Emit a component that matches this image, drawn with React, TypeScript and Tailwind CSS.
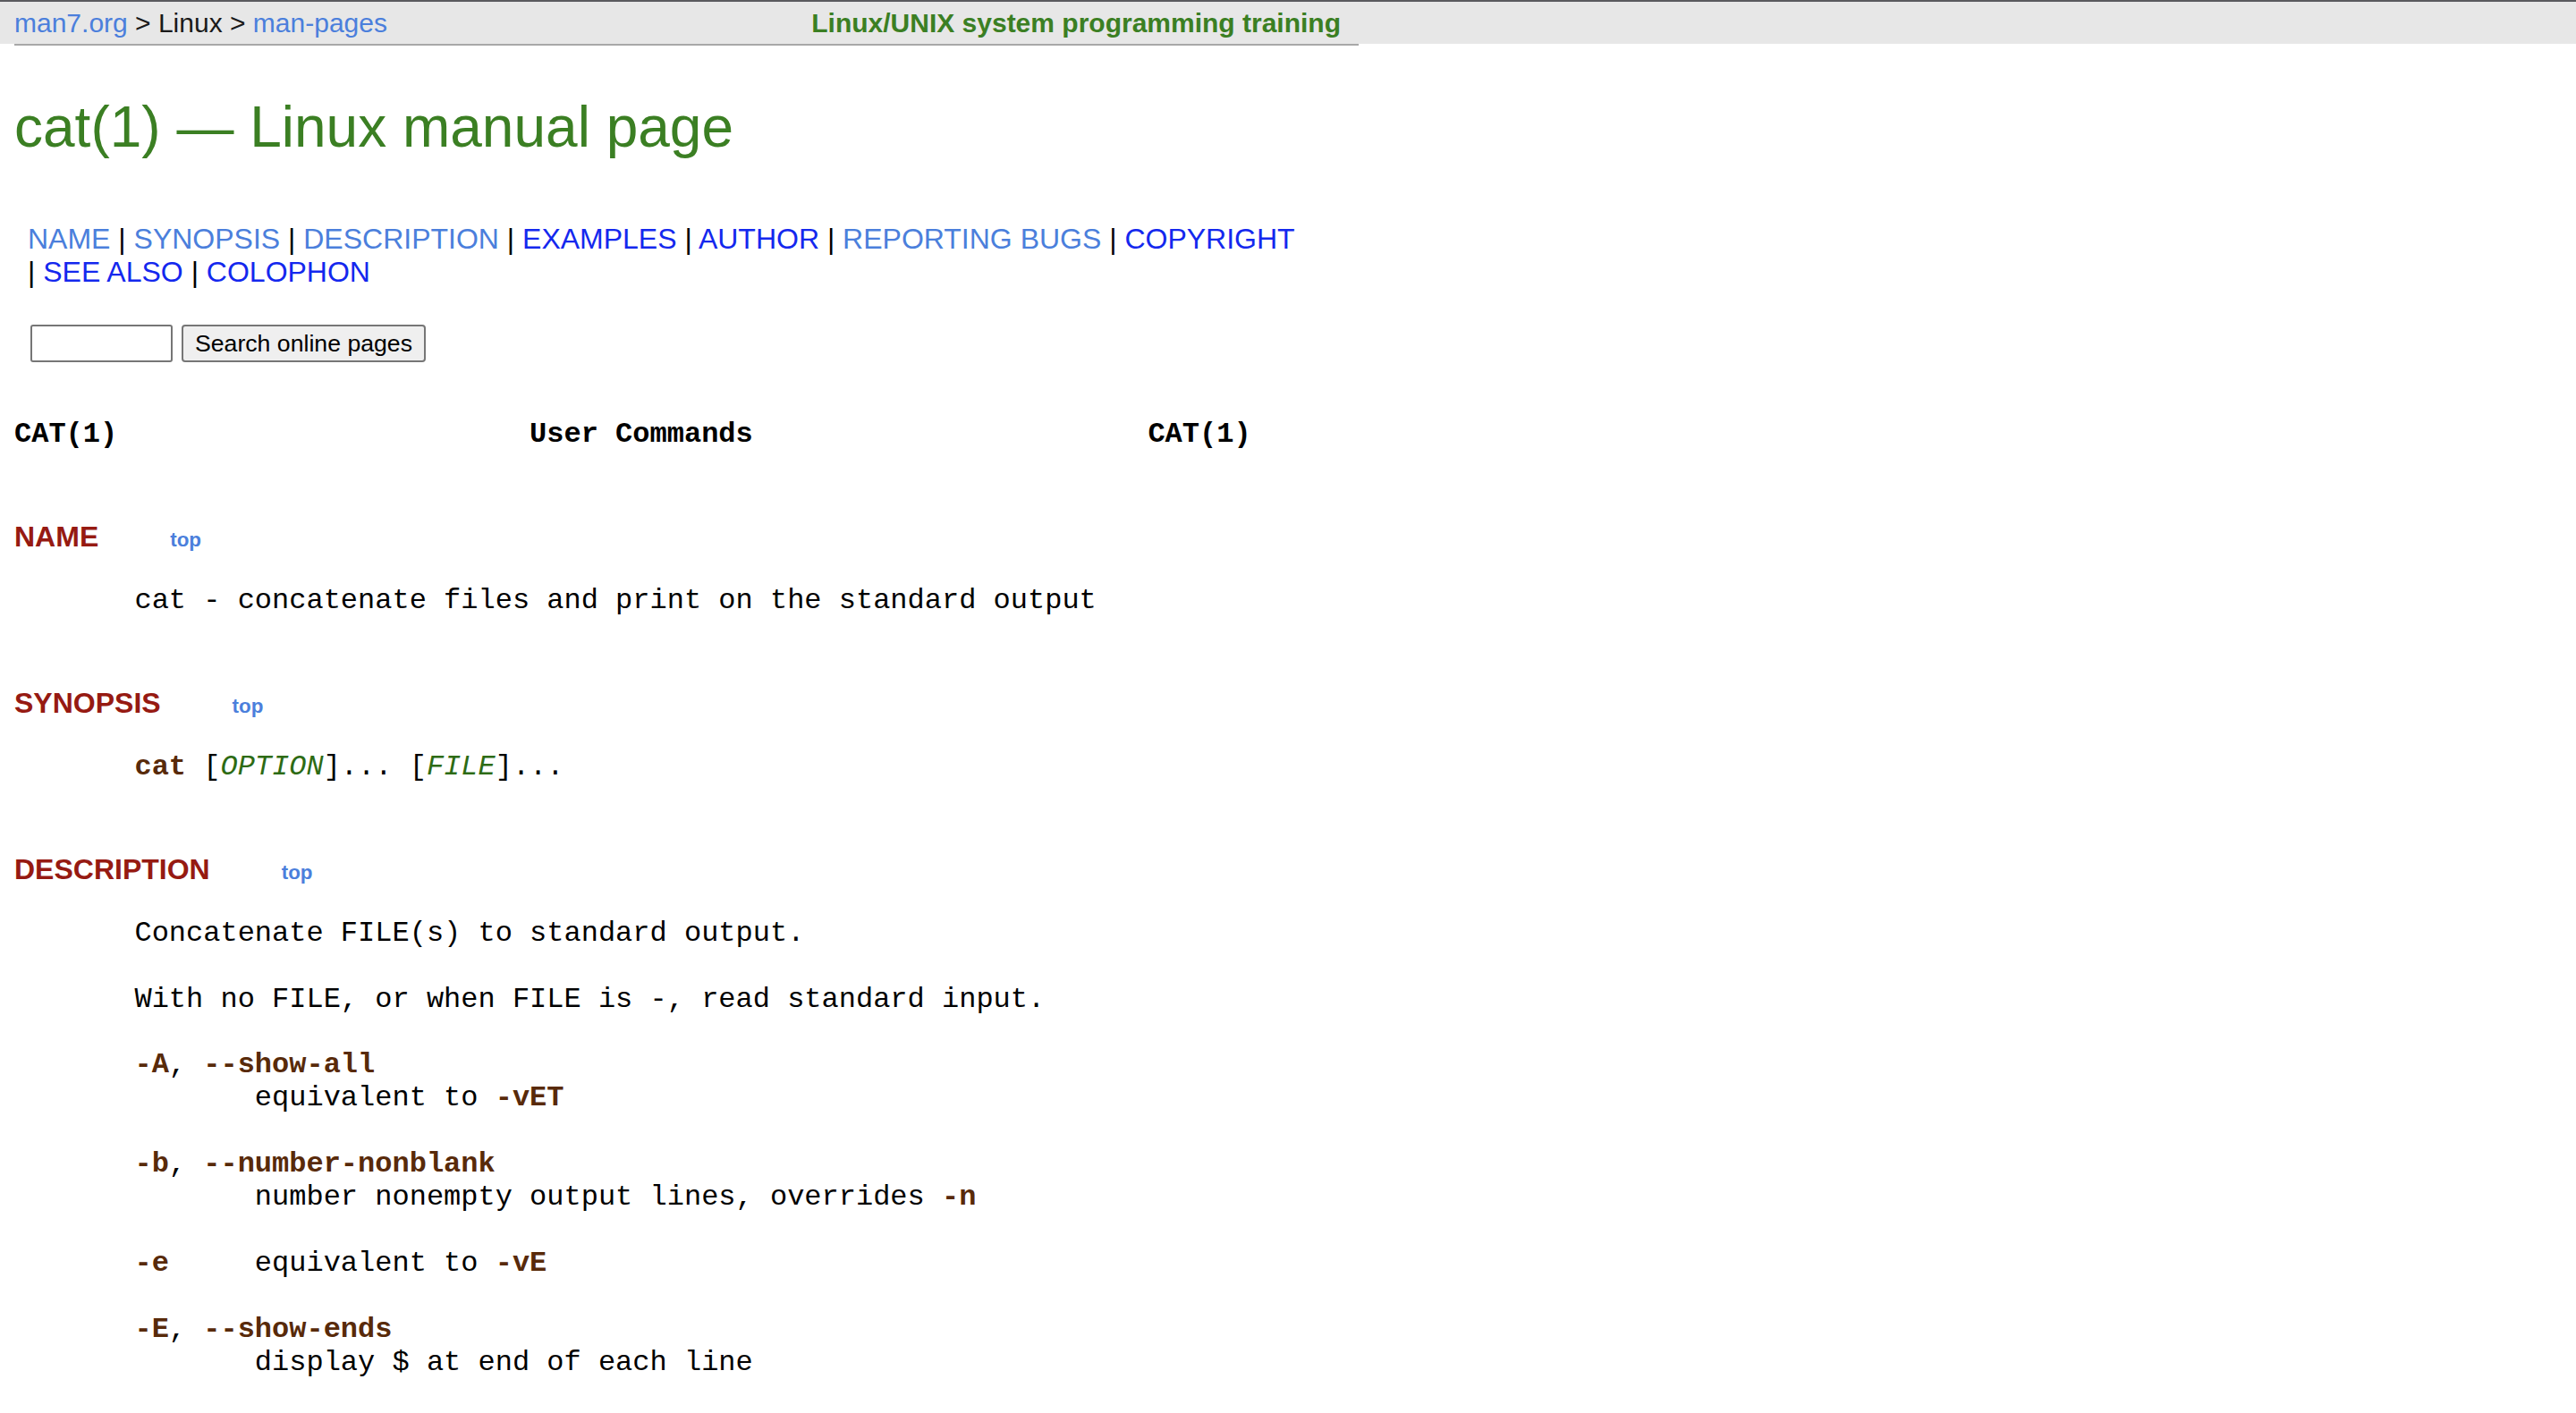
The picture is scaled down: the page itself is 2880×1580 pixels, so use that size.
import React from "react";

const SANS = { fontFamily: '"Liberation Sans", Arial, Helvetica, sans-serif' };
const MONO = { fontFamily: '"Liberation Mono", "Courier New", monospace' };

function B({ children }: { children: React.ReactNode }) {
  return <b className="font-bold text-[#582a0a]">{children}</b>;
}
function I({ children }: { children: React.ReactNode }) {
  return <i className="italic text-[#2d6b14]">{children}</i>;
}

function SectionHead({ title }: { title: string }) {
  return (
    <h2
      className="mt-[77px] ml-[16px] flex items-baseline h-[36px] leading-[36px] text-[32px] font-bold text-[#961a12]"
      style={SANS}
    >
      <span>{title}</span>
      <a href="#top" className="ml-[80px] text-[22.4px] font-bold text-[#4b7fdc] no-underline">
        top
      </a>
    </h2>
  );
}

function Pre({ children }: { children: React.ReactNode }) {
  return (
    <div
      className="mt-[36px] ml-[16px] whitespace-pre text-[32px] leading-[36.9px] text-black"
      style={MONO}
    >
      {children}
    </div>
  );
}

export default function App() {
  const lightLink = "text-[#4b7fdc]";
  const darkLink = "text-[#1428ee]";
  const sep = <span className="text-black"> | </span>;
  return (
    <div className="min-h-screen bg-white text-black" style={SANS}>
      {/* top navigation bar */}
      <div className="h-[49px] border-t-2 border-[#5a5a5e] bg-[#e7e7e7]">
        <div className="ml-[16px] flex w-[1503px] items-start justify-between pt-[7px] pr-[20px] text-[30px] leading-[34px]">
          <div className="text-[#1a1a1a]">
            <a className={lightLink}>man7.org</a> &gt; Linux &gt;{" "}
            <a className={lightLink}>man-pages</a>
          </div>
          <a className="font-bold text-[#3b7f23]">Linux/UNIX system programming training</a>
        </div>
      </div>
      <div className="ml-[16px] h-[2px] w-[1503px] bg-[#a8a8a8]" />

      {/* title */}
      <h1 className="ml-[16px] mt-[54px] h-[74px] text-[64px] font-normal leading-[74px] text-[#3b7f23]">
        cat(1) — Linux manual page
      </h1>

      {/* section nav */}
      <div className="ml-[31px] mt-[70px] text-[32px] leading-[37px]">
        <div className="whitespace-nowrap">
          <a className={lightLink}>NAME</a>
          {sep}
          <a className={lightLink}>SYNOPSIS</a>
          {sep}
          <a className={lightLink}>DESCRIPTION</a>
          {sep}
          <a className={darkLink}>EXAMPLES</a>
          {sep}
          <a className={darkLink}>AUTHOR</a>
          {sep}
          <a className={lightLink}>REPORTING BUGS</a>
          {sep}
          <a className={darkLink}>COPYRIGHT</a>
        </div>
        <div className="whitespace-nowrap">
          <span className="text-black">| </span>
          <a className={darkLink}>SEE ALSO</a>
          {sep}
          <a className={darkLink}>COLOPHON</a>
        </div>
      </div>

      {/* search form */}
      <div className="ml-[34px] mt-[40px] flex gap-[10px]">
        <input
          type="text"
          className="h-[42px] w-[159px] rounded-[3px] border-2 border-[#767676] bg-white"
        />
        <button
          className="h-[42px] w-[273px] rounded-[4px] border-2 border-[#767676] bg-[#efefef] text-[26.67px] leading-none text-black"
          style={SANS}
        >
          Search online pages
        </button>
      </div>

      {/* headline */}
      <div
        className="ml-[16px] mt-[63px] whitespace-pre text-[32px] font-bold leading-[36.9px] text-black"
        style={MONO}
      >
        {"CAT(1)                        User Commands                       CAT(1)"}
      </div>

      <SectionHead title="NAME" />
      <Pre>{"       cat - concatenate files and print on the standard output"}</Pre>

      <SectionHead title="SYNOPSIS" />
      <Pre>
        {"       "}
        <B>cat</B>
        {" ["}
        <I>OPTION</I>
        {"]... ["}
        <I>FILE</I>
        {"]..."}
      </Pre>

      <SectionHead title="DESCRIPTION" />
      <Pre>
        {"       Concatenate FILE(s) to standard output.\n\n"}
        {"       With no FILE, or when FILE is -, read standard input.\n\n"}
        {"       "}
        <B>-A</B>
        {", "}
        <B>--show-all</B>
        {"\n              equivalent to "}
        <B>-vET</B>
        {"\n\n       "}
        <B>-b</B>
        {", "}
        <B>--number-nonblank</B>
        {"\n              number nonempty output lines, overrides "}
        <B>-n</B>
        {"\n\n       "}
        <B>-e</B>
        {"     equivalent to "}
        <B>-vE</B>
        {"\n\n       "}
        <B>-E</B>
        {", "}
        <B>--show-ends</B>
        {"\n              display $ at end of each line"}
      </Pre>
    </div>
  );
}
